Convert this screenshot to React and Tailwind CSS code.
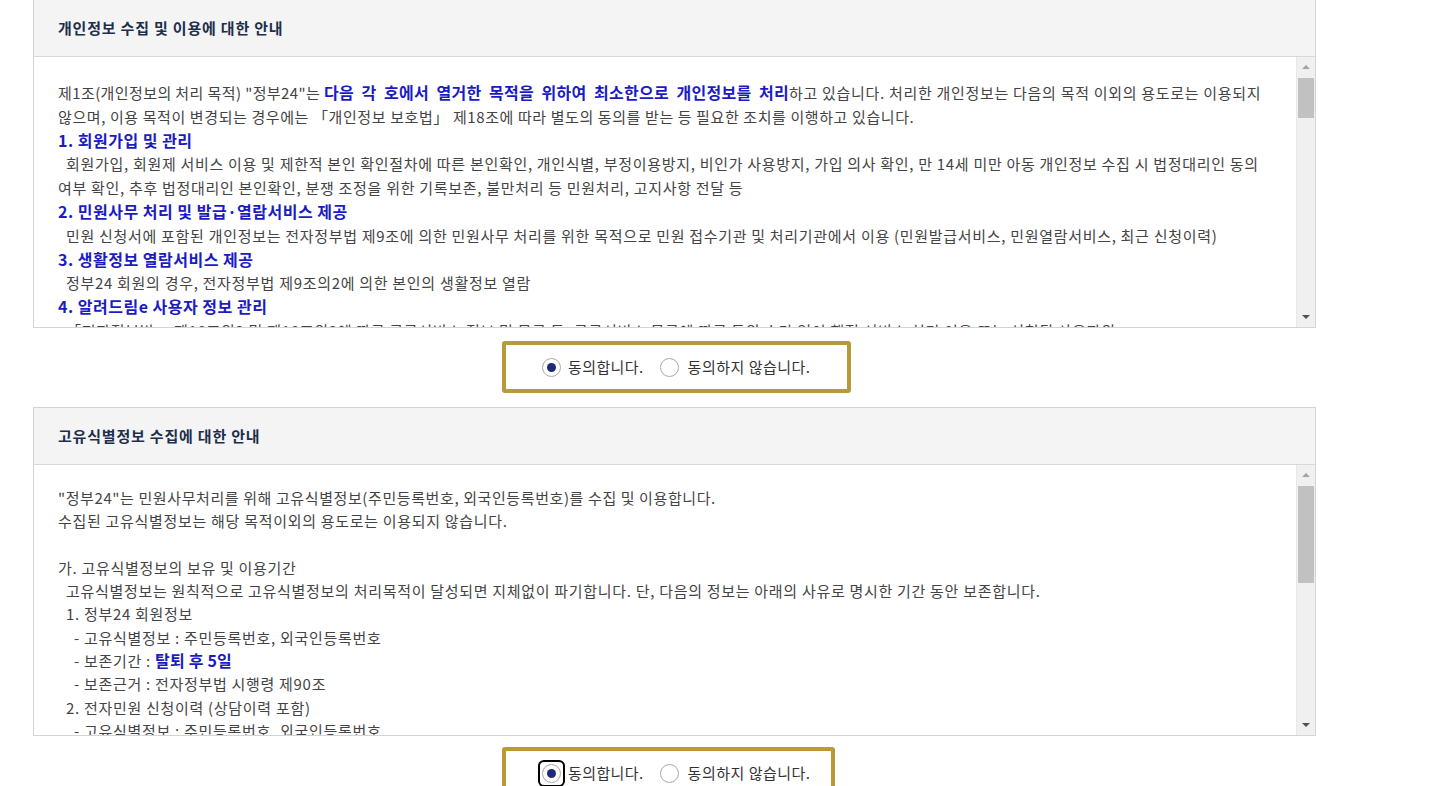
import React from "react";

const FONT = { fontFamily: '"Malgun Gothic", "Noto Sans CJK KR", "Noto Sans", sans-serif' };

function Scrollbar({ thumbTop, thumbHeight }) {
  return (
    <div className="absolute right-0 top-0 bottom-0 w-[19px] bg-[#f0f0f0] border-l border-[#e8e8e8]">
      <div className="absolute left-1/2 -translate-x-1/2 top-[8px] w-0 h-0 border-l-[4px] border-r-[4px] border-b-[4px] border-l-transparent border-r-transparent border-b-[#a3a3a3]" />
      <div
        className="absolute left-[1px] right-[1px] bg-[#c1c1c1]"
        style={{ top: thumbTop, height: thumbHeight }}
      />
      <div className="absolute left-1/2 -translate-x-1/2 bottom-[8px] w-0 h-0 border-l-[4px] border-r-[4px] border-t-[4px] border-l-transparent border-r-transparent border-t-[#505050]" />
    </div>
  );
}

function Radio({ checked, focus }) {
  return (
    <span className={"relative inline-flex items-center justify-center w-[21px] h-[21px] " + (focus ? "rounded-[3px] outline-2 outline-black outline-offset-[1px]" : "")}>
      <span className="w-[19px] h-[19px] rounded-full border border-[#a9a9a9] bg-white flex items-center justify-center">
        {checked && <span className="w-[9px] h-[9px] rounded-full bg-[#1e2a7a]" />}
      </span>
    </span>
  );
}

function AgreeBox({ width, focus }) {
  return (
    <div className="pl-[469px]">
      <div
        className="h-[52px] border-[4px] border-[#b99a3a] rounded-[3px] bg-white flex items-center pl-[35px] text-[15px] text-[#333]"
        style={{ width }}
      >
        <Radio checked focus={focus} />
        <span className="ml-[6px] tracking-[0.4px]">동의합니다.</span>
        <span className="ml-[15px] flex"><Radio /></span>
        <span className="ml-[8px] tracking-[0.5px]">동의하지 않습니다.</span>
      </div>
    </div>
  );
}

const B = ({ children }) => <b className="text-[#1b1bc4] font-bold text-[16px] tracking-[0.2px]">{children}</b>;
const H = ({ children }) => <div className="text-[#1b1bc4] font-bold text-[16px] tracking-[0.5px]">{children}</div>;

export default function App() {
  return (
    <div className="w-[1438px] h-[786px] overflow-hidden bg-white" style={FONT}>
      <div className="ml-[33px] w-[1283px]">
        {/* Panel 1 */}
        <div className="border-x border-b border-[#d4d4d4]">
          <div className="h-[57px] bg-[#f4f4f4] border-b border-[#d8d8d8] flex items-center pl-[24px] text-[15px] font-semibold tracking-[0.8px] text-[#1c2f4d]">
            개인정보 수집 및 이용에 대한 안내
          </div>
          <div className="relative h-[270px] overflow-hidden bg-white">
            <div className="pl-[24px] pt-[24px] text-[15px] tracking-[0.7px] text-[#444] leading-[23.8px] whitespace-nowrap">
              <div>
                <span className="tracking-[0.4px]">제1조(개인정보의 처리 목적) "정부24"는 </span>
                <b className="text-[#1b1bc4] font-bold text-[16px] tracking-[0.3px] [word-spacing:3.5px]">다음 각 호에서 열거한 목적을 위하여 최소한으로 개인정보를 처리</b>하고 있습니다. 처리한 개인정보는 다음의 목적 이외의 용도로는 이용되지
              </div>
              <div className="tracking-[0.6px]">않으며, 이용 목적이 변경되는 경우에는 「개인정보 보호법」 제18조에 따라 별도의 동의를 받는 등 필요한 조치를 이행하고 있습니다.</div>
              <H>1. 회원가입 및 관리</H>
              <div className="pl-[8px]">회원가입, 회원제 서비스 이용 및 제한적 본인 확인절차에 따른 본인확인, 개인식별, 부정이용방지, 비인가 사용방지, 가입 의사 확인, 만 14세 미만 아동 개인정보 수집 시 법정대리인 동의</div>
              <div>여부 확인, 추후 법정대리인 본인확인, 분쟁 조정을 위한 기록보존, 불만처리 등 민원처리, 고지사항 전달 등</div>
              <H>2. 민원사무 처리 및 발급·열람서비스 제공</H>
              <div className="pl-[8px]">민원 신청서에 포함된 개인정보는 전자정부법 제9조에 의한 민원사무 처리를 위한 목적으로 민원 접수기관 및 처리기관에서 이용 (민원발급서비스, 민원열람서비스, 최근 신청이력)</div>
              <H>3. 생활정보 열람서비스 제공</H>
              <div className="pl-[8px]">정부24 회원의 경우, 전자정부법 제9조의2에 의한 본인의 생활정보 열람</div>
              <H>4. 알려드림e 사용자 정보 관리</H>
              <div className="pl-[8px]">「전자정부법」 제18조의2 및 제18조의3에 따른 공공서비스 정보 및 목록 등, 공공서비스 목록에 따른 동의 수단 없이 행정 서비스 처리 이용 또는 신청된 사용자의</div>
            </div>
            <Scrollbar thumbTop={21} thumbHeight={40} />
          </div>
        </div>

        <div className="mt-[13px]">
          <AgreeBox width={349} />
        </div>

        {/* Panel 2 */}
        <div className="mt-[14px] border border-[#d4d4d4]">
          <div className="h-[57px] bg-[#f4f4f4] border-b border-[#d8d8d8] flex items-center pl-[24px] text-[15px] font-semibold tracking-[0.8px] text-[#1c2f4d]">
            고유식별정보 수집에 대한 안내
          </div>
          <div className="relative h-[270px] overflow-hidden bg-white">
            <div className="pl-[24px] pt-[21px] text-[15px] tracking-[0.7px] text-[#444] leading-[23.3px] whitespace-nowrap">
              <div className="tracking-[0.6px]">"정부24"는 민원사무처리를 위해 고유식별정보(주민등록번호, 외국인등록번호)를 수집 및 이용합니다.</div>
              <div>수집된 고유식별정보는 해당 목적이외의 용도로는 이용되지 않습니다.</div>
              <div className="h-[23.3px]" />
              <div>가. 고유식별정보의 보유 및 이용기간</div>
              <div className="pl-[8px]">고유식별정보는 원칙적으로 고유식별정보의 처리목적이 달성되면 지체없이 파기합니다. 단, 다음의 정보는 아래의 사유로 명시한 기간 동안 보존합니다.</div>
              <div className="pl-[8px]">1. 정부24 회원정보</div>
              <div className="pl-[16px]">- 고유식별정보 : 주민등록번호, 외국인등록번호</div>
              <div className="pl-[16px]">- 보존기간 : <B>탈퇴 후 5일</B></div>
              <div className="pl-[16px]">- 보존근거 : 전자정부법 시행령 제90조</div>
              <div className="pl-[8px]">2. 전자민원 신청이력 (상담이력 포함)</div>
              <div className="pl-[16px]">- 고유식별정보 : 주민등록번호, 외국인등록번호</div>
            </div>
            <Scrollbar thumbTop={21} thumbHeight={97} />
          </div>
        </div>

        <div className="mt-[11px]">
          <AgreeBox width={333} focus />
        </div>
      </div>
    </div>
  );
}
